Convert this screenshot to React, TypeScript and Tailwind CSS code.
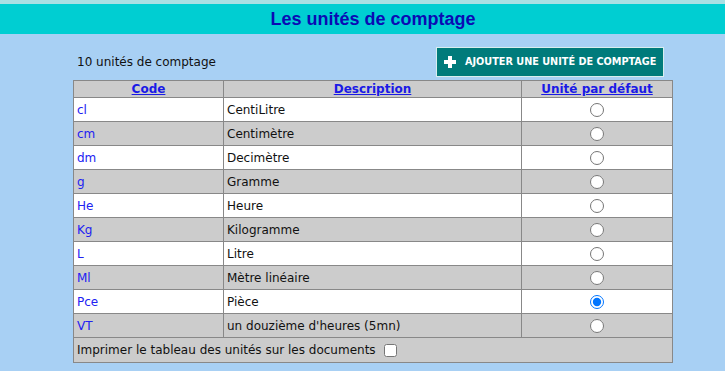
import { useState } from "react";

const units = [
  { code: "cl", label: "CentiLitre" },
  { code: "cm", label: "Centimètre" },
  { code: "dm", label: "Decimètre" },
  { code: "g", label: "Gramme" },
  { code: "He", label: "Heure" },
  { code: "Kg", label: "Kilogramme" },
  { code: "L", label: "Litre" },
  { code: "Ml", label: "Mètre linéaire" },
  { code: "Pce", label: "Pièce" },
  { code: "VT", label: "un douzième d'heures (5mn)" },
];

export default function App() {
  const [defaultUnit, setDefaultUnit] = useState("Pce");
  const [printTable, setPrintTable] = useState(false);

  return (
    <div className="h-[371px] w-full overflow-hidden bg-[#a8d0f4] font-['DejaVu_Sans',sans-serif] text-[12px] text-[#111]">
      <div className="w-[746px]">
        <div className="h-[4px] bg-[#a9e0e4]" />
        <div className="flex h-[30px] items-center justify-center bg-[#00ced2]">
          <h1 className="font-['Liberation_Sans',Arial,sans-serif] text-[18px] font-bold text-[#0b0bb4]">
            Les unités de comptage
          </h1>
        </div>

        <div className="mx-auto w-[600px]">
          <div className="flex h-[46px] items-start justify-between pl-1 pr-[9px] pt-[13px]">
            <span className="leading-[30px]">{units.length} unités de comptage</span>
            <button className="flex h-[30px] w-[228px] items-center gap-[9px] border border-[#d8eeee] bg-[#007b7b] pl-[7px] text-[9.7px] font-bold text-white">
              <svg width="12" height="12" viewBox="0 0 12 12">
                <path d="M4 0h4v4h4v4H8v4H4V8H0V4h4z" fill="white" />
              </svg>
              AJOUTER UNE UNITÉ DE COMPTAGE
            </button>
          </div>

          <table className="w-[600px] border-collapse border border-[#888]">
            <thead>
              <tr className="h-[17px] bg-[#cccccc]">
                <th className="w-[150px] border border-[#888] p-0 font-bold leading-[15px]">
                  <a href="#" className="text-[#1a1ae6] underline">Code</a>
                </th>
                <th className="w-[298px] border border-[#888] p-0 font-bold leading-[15px]">
                  <a href="#" className="text-[#1a1ae6] underline">Description</a>
                </th>
                <th className="border border-[#888] p-0 font-bold leading-[15px]">
                  <a href="#" className="text-[#1a1ae6] underline">Unité par défaut</a>
                </th>
              </tr>
            </thead>
            <tbody>
              {units.map((u, i) => (
                <tr
                  key={u.code}
                  className={`h-[24px] ${i % 2 === 0 ? "bg-white" : "bg-[#cccccc]"}`}
                >
                  <td className="border border-[#888] px-[3px] py-0 text-[#2121f2]">
                    {u.code}
                  </td>
                  <td className="border border-[#888] px-[3px] py-0">{u.label}</td>
                  <td className="border border-[#888] p-0 text-center">
                    <input
                      type="radio"
                      name="default"
                      className="m-0 h-[14px] w-[14px] align-middle"
                      checked={defaultUnit === u.code}
                      onChange={() => setDefaultUnit(u.code)}
                    />
                  </td>
                </tr>
              ))}
              <tr className="h-[25px] bg-[#cccccc]">
                <td colSpan={3} className="border border-[#888] px-[3px] py-0">
                  <label className="flex items-center gap-[8px]">
                    Imprimer le tableau des unités sur les documents
                    <input
                      type="checkbox"
                      className="m-0 h-[13px] w-[13px]"
                      checked={printTable}
                      onChange={(e) => setPrintTable(e.target.checked)}
                    />
                  </label>
                </td>
              </tr>
            </tbody>
          </table>
        </div>
      </div>
    </div>
  );
}
